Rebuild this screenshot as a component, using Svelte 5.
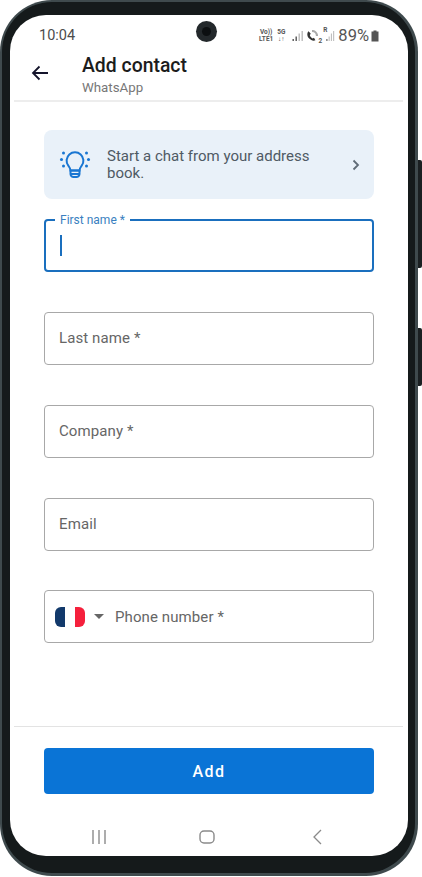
<script>
	const fields = [
		{ label: 'Last name *' },
		{ label: 'Company *' },
		{ label: 'Email' }
	];
</script>

<div class="phone">
	<span class="side-key volume"></span>
	<span class="side-key power"></span>
	<div class="bezel">
		<div class="screen">
			<div class="status-bar">
				<span class="time">10:04</span>
				<span class="camera"><span class="lens"></span></span>
				<div class="status-right">
					<span class="tiny">Vo))<br />LTE1</span>
					<span class="tiny">5G<br />↓↑</span>
					<svg class="signal" width="12" height="12" viewBox="0 0 12 12" aria-hidden="true">
						<rect x="0.5" y="9" width="1.4" height="2" fill="#555" />
						<rect x="3.5" y="6.5" width="1.4" height="4.5" fill="#555" />
						<rect x="6.5" y="3.5" width="1.4" height="7.5" fill="#bbb" />
						<rect x="9.5" y="1" width="1.4" height="10" fill="#bbb" />
					</svg>
					<svg width="12" height="12" viewBox="0 0 12 12" aria-hidden="true">
						<path d="M2.5 1.2 C0.6 3.4 1.2 6.6 3.2 8.6 C5 10.4 7.6 11.2 9.4 10.2 L8 7.8 L6.6 8.4 C5.2 7.8 4 6.4 3.8 5 L4.8 3.8 Z" fill="#333" />
						<path d="M6 1 A5 5 0 0 1 11 6" fill="none" stroke="#aaa" stroke-width="2.2" />
					</svg>
					<span class="sim">2</span>
					<span class="roam">R</span>
					<svg class="signal" width="9" height="12" viewBox="0 0 12 12" preserveAspectRatio="none" aria-hidden="true">
						<rect x="0.5" y="9" width="1.4" height="2" fill="#555" />
						<rect x="3.5" y="6.5" width="1.4" height="4.5" fill="#bbb" />
						<rect x="6.5" y="3.5" width="1.4" height="7.5" fill="#bbb" />
						<rect x="9.5" y="1" width="1.4" height="10" fill="#bbb" />
					</svg>
					<span class="percent">89%</span>
					<svg width="8" height="12" viewBox="0 0 8 12" aria-hidden="true">
						<path d="M2.5 0.5h3v1h2v10h-7v-10h2z" fill="#555" />
					</svg>
				</div>
			</div>

			<header class="app-bar">
				<button class="back" type="button" aria-label="Back">
					<svg width="18" height="16" viewBox="0 0 18 16" aria-hidden="true">
						<path d="M17 8H2M8.5 1.5 2 8l6.500 6.500" fill="none" stroke="#14142b" stroke-width="1.800" />
					</svg>
				</button>
				<div class="titles">
					<h1>Add contact</h1>
					<p>WhatsApp</p>
				</div>
			</header>

			<main class="content">
				<button class="banner" type="button">
					<svg class="bulb" width="32" height="32" viewBox="0 0 32 32" aria-hidden="true">
						<path d="M11.500 21.500c0-2.200-1-3.200-2.200-4.800a8.400 8.400 0 1 1 13.400 0c-1.200 1.600-2.200 2.600-2.200 4.800z" fill="none" stroke="#1976d2" stroke-width="2" />
						<path d="M11.500 21.500h9v3.500c0 1.800-1.500 3-3 3h-3c-1.500 0-3-1.200-3-3zM11.500 25h9" fill="none" stroke="#1976d2" stroke-width="2" />
						<g fill="#1976d2">
							<circle cx="2.500" cy="10.500" r="1.500" />
							<circle cx="29.500" cy="10.500" r="1.500" />
							<circle cx="4.500" cy="4" r="1.500" />
							<circle cx="27.500" cy="4" r="1.500" />
							<circle cx="4.500" cy="17" r="1.500" />
							<circle cx="27.500" cy="17" r="1.500" />
						</g>
					</svg>
					<span class="banner-text">Start a chat from your address book.</span>
					<svg width="8" height="12" viewBox="0 0 8 12" aria-hidden="true">
						<path d="M1.500 1.500 6 6l-4.500 4.500" fill="none" stroke="#5f6b76" stroke-width="1.800" />
					</svg>
				</button>

				<div class="form">
					<div class="field active">
						<span class="float-label">First name *</span>
						<span class="caret"></span>
					</div>
					{#each fields as field}
						<div class="field">
							<span class="placeholder">{field.label}</span>
						</div>
					{/each}
					<div class="field phone-field">
						<svg class="flag" width="30" height="20" viewBox="0 0 30 20" aria-hidden="true">
							<path d="M10 0H6a6 6 0 0 0-6 6v8a6 6 0 0 0 6 6h4z" fill="#12396b" />
							<path d="M20 0h4a6 6 0 0 1 6 6v8a6 6 0 0 1-6 6h-4z" fill="#f5203c" />
						</svg>
						<span class="arrow"></span>
						<span class="placeholder">Phone number *</span>
					</div>
				</div>
			</main>

			<div class="footer">
				<button class="add" type="button">Add</button>
			</div>

			<nav class="nav-bar">
				<svg width="16" height="14" viewBox="0 0 16 14" aria-hidden="true">
					<path d="M2 0v14M8 0v14M14 0v14" stroke="#8a8a8a" stroke-width="1.400" fill="none" />
				</svg>
				<svg class="home" width="16" height="14" viewBox="0 0 16 14" aria-hidden="true">
					<rect x="1" y="1" width="14" height="12" rx="4" stroke="#8a8a8a" stroke-width="1.400" fill="none" />
				</svg>
				<svg width="10" height="16" viewBox="0 0 10 16" aria-hidden="true">
					<path d="M9 1 2 8l7 7" stroke="#8a8a8a" stroke-width="1.300" fill="none" />
				</svg>
			</nav>
		</div>
	</div>
</div>

<style>
	:global(body) {
		margin: 0;
		background: #fff;
	}

	.phone {
		position: relative;
		box-sizing: border-box;
		width: 418px;
		height: 876px;
		padding: 2px 3px 3px 2px;
		background: #3f4a4d;
		border-radius: 52px;
		font-family: Roboto, "Noto Sans", sans-serif;
	}

	.side-key {
		position: absolute;
		left: 418px;
		width: 4px;
		background: #1b2022;
		border-radius: 0 2px 2px 0;
	}

	.volume {
		top: 160px;
		height: 108px;
	}

	.power {
		top: 328px;
		height: 58px;
	}

	.bezel {
		box-sizing: border-box;
		height: 100%;
		padding: 13px 7px 17px 8px;
		background: #151a1b;
		border-radius: 50px;
	}

	.screen {
		display: flex;
		flex-direction: column;
		height: 100%;
		background: #fff;
		border-radius: 36px;
		overflow: hidden;
	}

	.status-bar {
		position: relative;
		flex: none;
		display: flex;
		align-items: center;
		justify-content: space-between;
		height: 39px;
		padding: 2px 29px 0 29px;
		box-sizing: border-box;
		color: #555;
	}

	.time {
		font-size: 14.500px;
		color: #4c4c4c;
	}

	.camera {
		position: absolute;
		left: 186px;
		top: 6px;
		width: 21px;
		height: 21px;
		border-radius: 50%;
		background: #23282b;
		display: flex;
		align-items: center;
		justify-content: center;
	}

	.lens {
		width: 9px;
		height: 9px;
		border-radius: 50%;
		background: #0c0f11;
	}

	.status-right {
		position: relative;
		display: flex;
		align-items: center;
		gap: 2px;
	}

	.tiny {
		font-size: 6.500px;
		line-height: 7px;
		font-weight: 700;
		text-align: center;
		color: #555;
		margin-right: 2px;
	}

	.signal {
		margin-left: 3px;
	}

	.sim {
		font-size: 6.500px;
		font-weight: 700;
		align-self: flex-end;
		margin-left: -2px;
		margin-right: -1px;
	}

	.roam {
		font-size: 6.500px;
		font-weight: 700;
		align-self: flex-start;
		margin-right: -6px;
	}

	.percent {
		font-size: 16.500px;
		margin-left: 1px;
		color: #555;
	}

	.app-bar {
		flex: none;
		display: flex;
		align-items: center;
		height: 46px;
		margin: 0 5px 0 4px;
		padding-left: 16px;
		border-bottom: 2px solid #ededed;
	}

	.back {
		width: 19px;
		height: 16px;
		padding: 0;
		margin-top: -8px;
		border: none;
		background: none;
	}

	.titles {
		margin-top: -4px;
		margin-left: 33px;
	}

	h1 {
		margin: 0;
		font-size: 19.400px;
		line-height: 23px;
		font-weight: 500;
		color: #1c1c1c;
	}

	p {
		margin: 0;
		padding-top: 2px;
		font-size: 13.300px;
		line-height: 17px;
		color: #777;
	}

	.content {
		flex: 1;
		padding: 28px 0 0 34px;
	}

	.banner {
		display: flex;
		align-items: center;
		box-sizing: border-box;
		width: 330px;
		height: 69px;
		padding: 0 14px 0 15px;
		border: none;
		border-radius: 8px;
		background: #e9f1f9;
		text-align: left;
		font-family: inherit;
	}

	.banner-text {
		flex: 1;
		margin-left: 16px;
		margin-right: 20px;
		font-size: 15px;
		line-height: 17px;
		color: #4f5a64;
	}

	.bulb {
		flex: none;
	}

	.form {
		display: flex;
		flex-direction: column;
		gap: 39.850px;
		margin-top: 20px;
		width: 330px;
	}

	.field {
		position: relative;
		box-sizing: border-box;
		display: flex;
		align-items: center;
		height: 53px;
		padding: 0 14px;
		border: 1px solid #a8a8a8;
		border-radius: 4px;
	}

	.field.active {
		border: 2px solid #1a6fbe;
		padding: 0 14px;
	}

	.float-label {
		position: absolute;
		left: 9px;
		top: -7px;
		padding: 0 5px;
		background: #fff;
		font-size: 12px;
		line-height: 13px;
		color: #3a7fc0;
	}

	.caret {
		width: 2px;
		height: 21px;
		background: #1a6fbe;
	}

	.placeholder {
		font-size: 15px;
		letter-spacing: 0.1px;
		color: #666;
	}

	.phone-field {
		padding-left: 10px;
	}

	.flag {
		flex: none;
	}

	.arrow {
		width: 0;
		height: 0;
		margin: 0 11px 0 9px;
		border-left: 5px solid transparent;
		border-right: 5px solid transparent;
		border-top: 5px solid #666;
	}

	.footer {
		flex: none;
		margin: 0 5px 0 4px;
		padding: 21px 30px 0;
		border-top: 1px solid #e3e3e3;
	}

	.add {
		display: block;
		width: 330px;
		height: 46px;
		border: none;
		border-radius: 4px;
		background: #0a74d6;
		color: #fff;
		font-family: inherit;
		font-size: 16px;
		font-weight: 500;
		letter-spacing: 1.500px;
	}

	.nav-bar {
		flex: none;
		display: flex;
		align-items: center;
		justify-content: space-between;
		height: 62px;
		padding: 23px 86px 0 81px;
		box-sizing: border-box;
	}

	.home {
		margin-left: -5px;
	}
</style>
